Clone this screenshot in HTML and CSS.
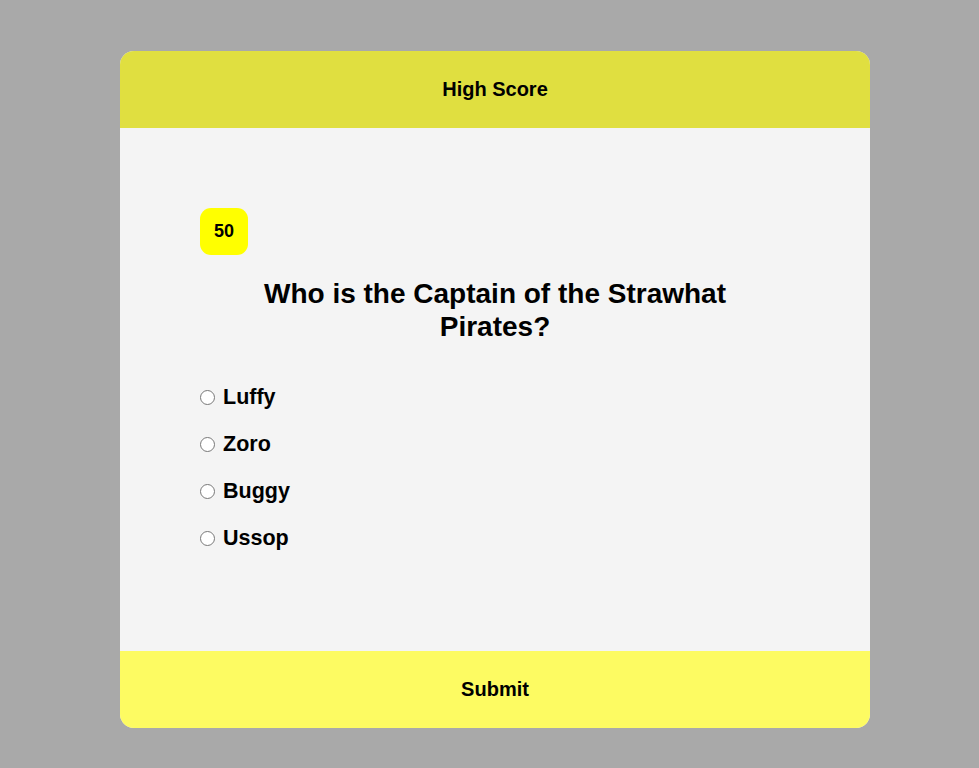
FILE: index.html
```html
<!DOCTYPE html>
<html>
<head>
<meta charset="utf-8">
<link rel="stylesheet" href="styles.css">
</head>
<body>
<div class="card">
  <div class="header">High Score</div>
  <div class="content">
    <div class="badge">50</div>
    <h2 class="question">Who is the Captain of the Strawhat Pirates?</h2>
    <ul class="options">
      <li><label><input type="radio" name="a"> Luffy</label></li>
      <li><label><input type="radio" name="a"> Zoro</label></li>
      <li><label><input type="radio" name="a"> Buggy</label></li>
      <li><label><input type="radio" name="a"> Ussop</label></li>
    </ul>
  </div>
  <button class="submit">Submit</button>
</div>
</body>
</html>
```
FILE: styles.css
```css
html, body {
  margin: 0;
  padding: 0;
}
body {
  background: #a9a9a9;
  font-family: "Liberation Sans", Arial, sans-serif;
  font-weight: bold;
  color: #000;
  height: 768px;
  padding-top: 51px;
  box-sizing: border-box;
}
.card {
  width: 750px;
  height: 677px;
  margin: 0 0 0 120px;
  border-radius: 14px;
  overflow: hidden;
  background: #f4f4f4;
  display: flex;
  flex-direction: column;
}
.header {
  height: 77px;
  flex: none;
  background: #e0df40;
  display: flex;
  align-items: center;
  justify-content: center;
  font-size: 20px;
}
.content {
  flex: 1;
  padding: 80px 80px 0;
  display: flex;
  flex-direction: column;
}
.badge {
  width: 48px;
  height: 47px;
  border-radius: 11px;
  background: #ffff00;
  display: flex;
  align-items: center;
  justify-content: center;
  font-size: 18px;
}
.question {
  margin: 22px auto 0;
  width: 500px;
  text-align: center;
  font-size: 28px;
  line-height: 33px;
  font-weight: bold;
}
.options {
  list-style: none;
  margin: 41px 0 0;
  padding: 0;
  display: flex;
  flex-direction: column;
  gap: 21px;
}
.options li {
  font-size: 21.5px;
  line-height: 26px;
}
.options label {
  display: flex;
  align-items: center;
  gap: 8px;
}
.options input {
  margin: 0;
  width: 15px;
  height: 15px;
}
.submit {
  height: 77px;
  flex: none;
  border: none;
  background: #fdfb62;
  font-family: inherit;
  font-weight: bold;
  font-size: 20px;
  color: #000;
}
```
